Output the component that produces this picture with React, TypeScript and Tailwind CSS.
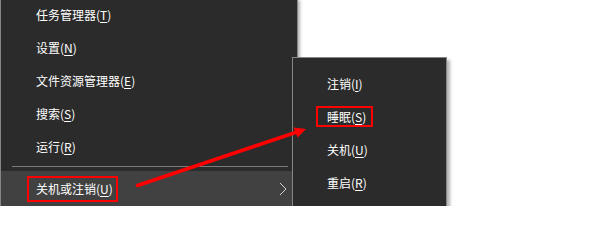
import React from "react";

type Item = { label: string; key: string };

const MAIN_ITEMS: Item[] = [
  { label: "任务管理器", key: "T" },
  { label: "设置", key: "N" },
  { label: "文件资源管理器", key: "E" },
  { label: "搜索", key: "S" },
  { label: "运行", key: "R" },
];

const SUB_ITEMS: Item[] = [
  { label: "注销", key: "I" },
  { label: "睡眠", key: "S" },
  { label: "关机", key: "U" },
  { label: "重启", key: "R" },
];

function Label({ label, accel }: { label: string; accel: string }) {
  return (
    <span className="text-[12px] leading-none text-white whitespace-nowrap">
      {label}(<u className="underline-offset-[2px]">{accel}</u>)
    </span>
  );
}

export default function App() {
  return (
    <div className="relative w-[600px] h-[206px] overflow-hidden bg-white font-['Noto_Sans_CJK_SC','Liberation_Sans',sans-serif]">
      {/* Win+X main menu */}
      <div className="flex flex-col w-[298px] h-full bg-[#2b2b2b] border-l border-r border-[#858585] shadow-[2px_0_3px_rgba(0,0,0,0.3)]">
        <div className="flex flex-col -mt-[2px]">
          {MAIN_ITEMS.map((it) => (
            <div key={it.label} className="flex items-center h-[33px] pl-[35px]">
              <Label label={it.label} accel={it.key} />
            </div>
          ))}
        </div>
        {/* separator */}
        <div className="pt-[3px] pb-[4px] pl-[11px] pr-[9px]">
          <div className="h-px bg-[#7b7b7b]" />
        </div>
        {/* hovered item */}
        <div className="flex items-center justify-between h-[35px] pl-[35px] pr-[10px] bg-[#414141]">
          <Label label="关机或注销" accel="U" />
          <svg width="8" height="14" viewBox="0 0 8 14" className="mr-[0px]">
            <polyline points="1,1 7,7 1,13" fill="none" stroke="#d0d0d0" strokeWidth="1" />
          </svg>
        </div>
      </div>

      {/* submenu */}
      <div className="absolute left-[292px] top-[57px] w-[155px] h-[160px] bg-[#2b2b2b] border border-[#858585] shadow-[3px_3px_3px_rgba(0,0,0,0.3)] pt-[9px]">
        {SUB_ITEMS.map((it) => (
          <div key={it.label} className="flex items-center h-[33px] pl-[34px]">
            <Label label={it.label} accel={it.key} />
          </div>
        ))}
      </div>

      {/* annotations */}
      <div className="absolute left-[27px] top-[176px] w-[91px] h-[26px] border-2 border-[#ff0000]" />
      <div className="absolute left-[316px] top-[106px] w-[57px] h-[21px] border-2 border-[#ff0000]" />
      <svg className="absolute inset-0 pointer-events-none" width="600" height="206" viewBox="0 0 600 206">
        <line x1="137.5" y1="185.5" x2="297" y2="132" stroke="#ff0000" strokeWidth="3.5" strokeLinecap="round" />
        <polygon points="306,129 293.5,127.5 297.5,137.5" fill="#ff0000" />
      </svg>
    </div>
  );
}
